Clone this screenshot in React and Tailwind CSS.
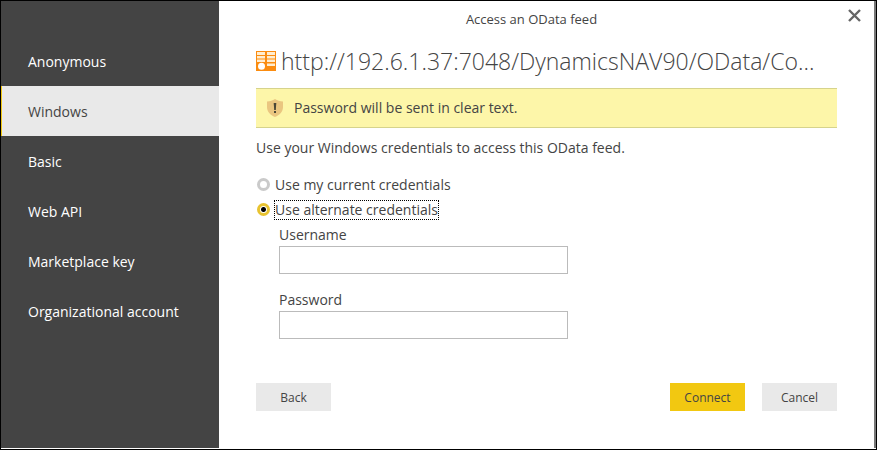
import React, { useState } from 'react';

const authTypes = [
  'Anonymous',
  'Windows',
  'Basic',
  'Web API',
  'Marketplace key',
  'Organizational account',
];

function FeedIcon() {
  return (
    <svg width="20" height="20" viewBox="0 0 20 20" className="shrink-0" aria-hidden="true">
      <rect width="20" height="20" fill="#fb8c10" />
      <g fill="#ffedd0">
        <rect x="1" y="1" width="8" height="3" />
        <rect x="1" y="5" width="8" height="2.500" />
        <rect x="1" y="8.500" width="8" height="2.500" />
        <rect x="11" y="1" width="8" height="3" />
        <rect x="11" y="5" width="8" height="2.500" />
        <rect x="11" y="8.500" width="8" height="2.500" />
        <rect x="11" y="12.500" width="8" height="2.500" />
      </g>
      <circle cx="5.500" cy="15.200" r="4.200" fill="#fb8c10" />
      <circle cx="5.500" cy="15.200" r="3.500" fill="#fff" />
    </svg>
  );
}

function ShieldIcon() {
  return (
    <svg width="16" height="18" viewBox="0 0 16 18" className="shrink-0" aria-hidden="true">
      <path d="M8 0c2.3 1.600 5 2.400 8 2.500v5.500c0 4.700-3.200 8.200-8 10-4.800-1.800-8-5.300-8-10V2.500C3 2.400 5.700 1.600 8 0z" fill="#eac680" />
      <path d="M6.700 4h2.600l-.5 7H7.200z" fill="#4a4636" />
      <rect x="7" y="12" width="2" height="2" fill="#4a4636" />
    </svg>
  );
}

function CredentialOption({ id, label, checked, onSelect }) {
  return (
    <div className="flex h-[25px] items-center gap-1">
      <input
        type="radio"
        id={id}
        name="credentials"
        checked={checked}
        onChange={onSelect}
        className="ml-px size-[13px] appearance-none rounded-full border-[3px] border-[#cacaca] bg-white checked:border-[#e8c330] checked:bg-[radial-gradient(circle,#000_0_2px,#fff_3px)]"
      />
      <label
        htmlFor={id}
        className={`border border-dotted leading-[18px] ${checked ? 'border-black' : 'border-transparent'}`}
      >
        {label}
      </label>
    </div>
  );
}

export default function App() {
  const [authType, setAuthType] = useState('Windows');
  const [mode, setMode] = useState('alternate');
  const [username, setUsername] = useState('');
  const [password, setPassword] = useState('');

  return (
    <div className="flex min-h-screen border border-black bg-white pb-px font-['Open_Sans','Noto_Sans',sans-serif] text-sm text-[#444]">
      <nav className="w-1/4 max-w-[218px] bg-[#444] pt-[35px]">
        {authTypes.map((type) => (
          <button
            key={type}
            type="button"
            onClick={() => setAuthType(type)}
            className={`flex h-[50px] w-full items-center border-l pl-[26px] pt-0.5 text-left ${type === authType ? 'border-[#f2c811] bg-[#e9e9e9] text-[#444]' : 'border-transparent text-white'}`}
          >
            {type}
          </button>
        ))}
      </nav>

      <main className="flex min-w-0 flex-1 flex-col border-r-2 border-[#777]">
        <header className="flex h-9 items-center">
          <h1 className="flex-1 text-center text-[13px]">Access an OData feed</h1>
          <button type="button" aria-label="Close" className="mr-0.5 flex h-7 w-7 items-start justify-start pl-1 pt-1">
            <svg width="13" height="13" viewBox="0 0 13 13" aria-hidden="true">
              <path d="M1 1l11 11M12 1L1 12" stroke="#666" strokeWidth="2.4" />
            </svg>
          </button>
        </header>

        <div className="flex flex-1 flex-col px-[37px]">
          <div className="flex h-[51px] items-center gap-[5px] pb-1">
            <FeedIcon />
            <h2 className="truncate text-[23px] font-light leading-9">http://192.6.1.37:7048/DynamicsNAV90/OData/Co...</h2>
          </div>

          <div role="alert" className="flex h-10 items-center gap-[11px] border-y border-[#d6d38c] bg-[#fdf6a9] pl-[11px]">
            <ShieldIcon />
            <span>Password will be sent in clear text.</span>
          </div>

          <p className="pt-[10px] leading-5">Use your Windows credentials to access this OData feed.</p>

          <form className="flex flex-1 flex-col pt-[14px]" onSubmit={(e) => e.preventDefault()}>
            <CredentialOption
              id="current"
              label="Use my current credentials"
              checked={mode === 'current'}
              onSelect={() => setMode('current')}
            />
            <CredentialOption
              id="alternate"
              label="Use alternate credentials"
              checked={mode === 'alternate'}
              onSelect={() => setMode('alternate')}
            />

            <div className="flex max-w-[312px] flex-col pl-[23px]">
              <label htmlFor="username" className="pb-px pt-[3px] leading-5">Username</label>
              <input
                id="username"
                type="text"
                value={username}
                onChange={(e) => setUsername(e.target.value)}
                className="h-7 border border-[#bbb] bg-white px-2"
              />
              <label htmlFor="password" className="pb-px pt-4 leading-5">Password</label>
              <input
                id="password"
                type="password"
                value={password}
                onChange={(e) => setPassword(e.target.value)}
                className="h-7 border border-[#bbb] bg-white px-2"
              />
            </div>

            <div className="mt-auto flex gap-[17px] pb-[37px] pt-6 text-xs">
              <button type="button" className="mr-auto h-7 w-[75px] bg-[#e9e9e9] pt-0.5">Back</button>
              <button type="submit" className="h-7 w-[75px] bg-[#f2c811] pt-0.5">Connect</button>
              <button type="button" className="h-7 w-[75px] bg-[#e9e9e9] pt-0.5">Cancel</button>
            </div>
          </form>
        </div>
      </main>
    </div>
  );
}
